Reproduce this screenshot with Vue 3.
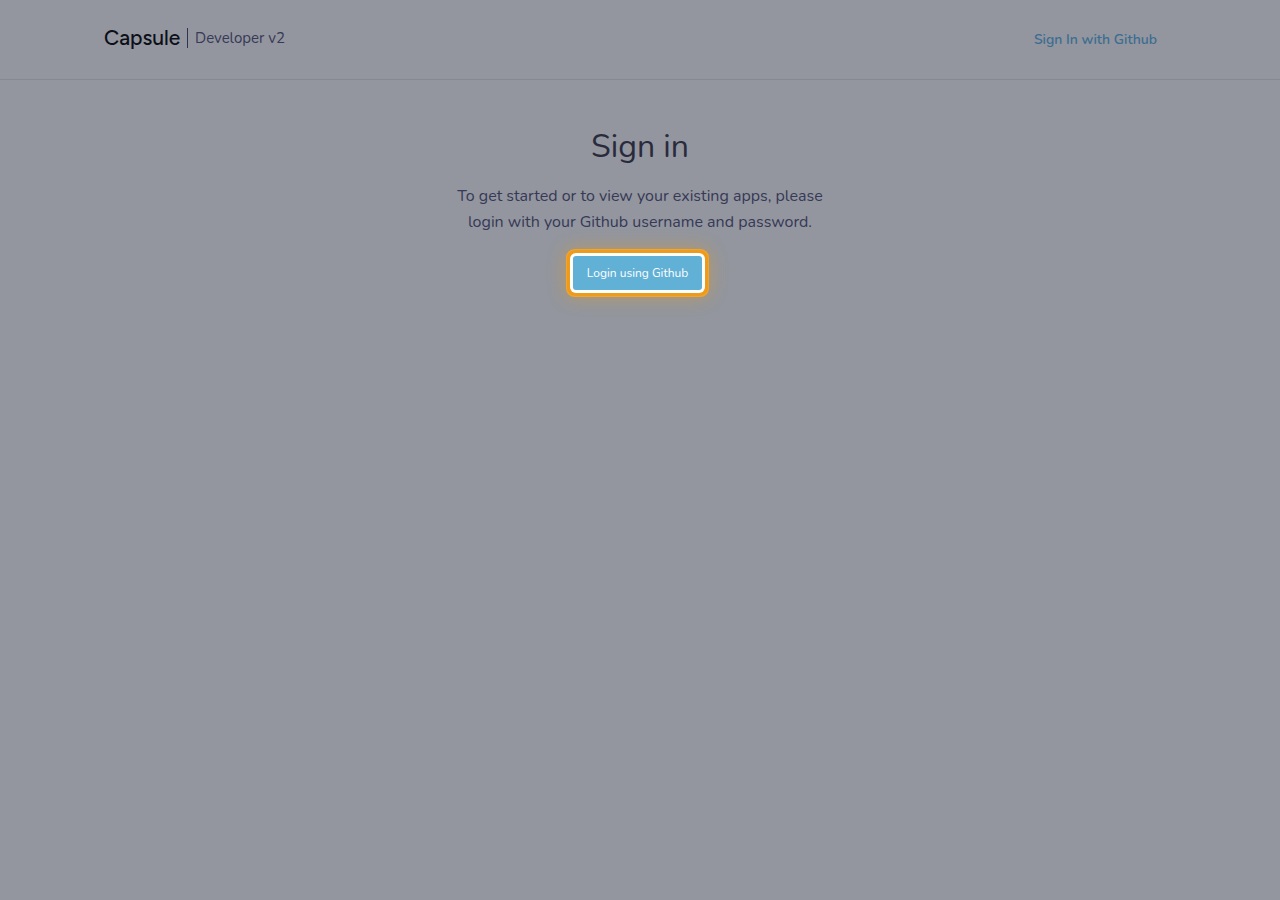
<script setup>
</script>

<template>
  <div class="page">
    <header class="header">
      <a class="brand" href="#"><span class="logo">Capsule</span><span class="product">Developer v2</span></a>
      <a class="signin" href="#">Sign In with Github</a>
    </header>
    <main class="main">
      <h1>Sign in</h1>
      <p>To get started or to view your existing apps, please login with your Github username and password.</p>
      <button type="button">Login using Github</button>
    </main>
  </div>
</template>

<style>
body { background: #93969e; }
</style>

<style scoped>
.page { min-height: 100vh; font-family: Nunito, "Noto Sans", sans-serif; color: #363957; }
.header { display: flex; justify-content: space-between; height: 79px; padding: 0 123px 0 104px; border-bottom: 1px solid #868992; }
.brand { display: flex; height: 20px; margin-top: 28px; color: inherit; text-decoration: none; }
.logo { box-sizing: border-box; width: 84px; font: 500 21px/20px Figtree, Lato, sans-serif; color: #0d0f19; border-right: 1px solid #30334f; }
.product { font-size: 15px; line-height: 20px; padding-left: 7px; }
.signin { margin-top: 30px; font-size: 14px; line-height: 20px; font-weight: 600; color: #3b6d91; text-decoration: none; }
.main { display: flex; flex-direction: column; align-items: center; padding-top: 45px; }
h1 { margin: 0; font-size: 32px; line-height: 44px; font-weight: 400; color: #292b3d; }
p { margin: 14px 0 0; width: 380px; text-align: center; font-size: 16px; line-height: 26px; }
button { margin: 21px 5px 0 0; height: 34px; padding: 0 14px; border: 0; border-radius: 3px; background: #61b0d6; color: #fff; font-family: inherit; font-size: 12px; line-height: 20px; box-shadow: 0 0 0 3px #fff, 0 0 0 6px #ee9b1c, 0 0 0 7px #f0a52d, 0 0 18px 7px rgba(245,158,11,.4); }
</style>
